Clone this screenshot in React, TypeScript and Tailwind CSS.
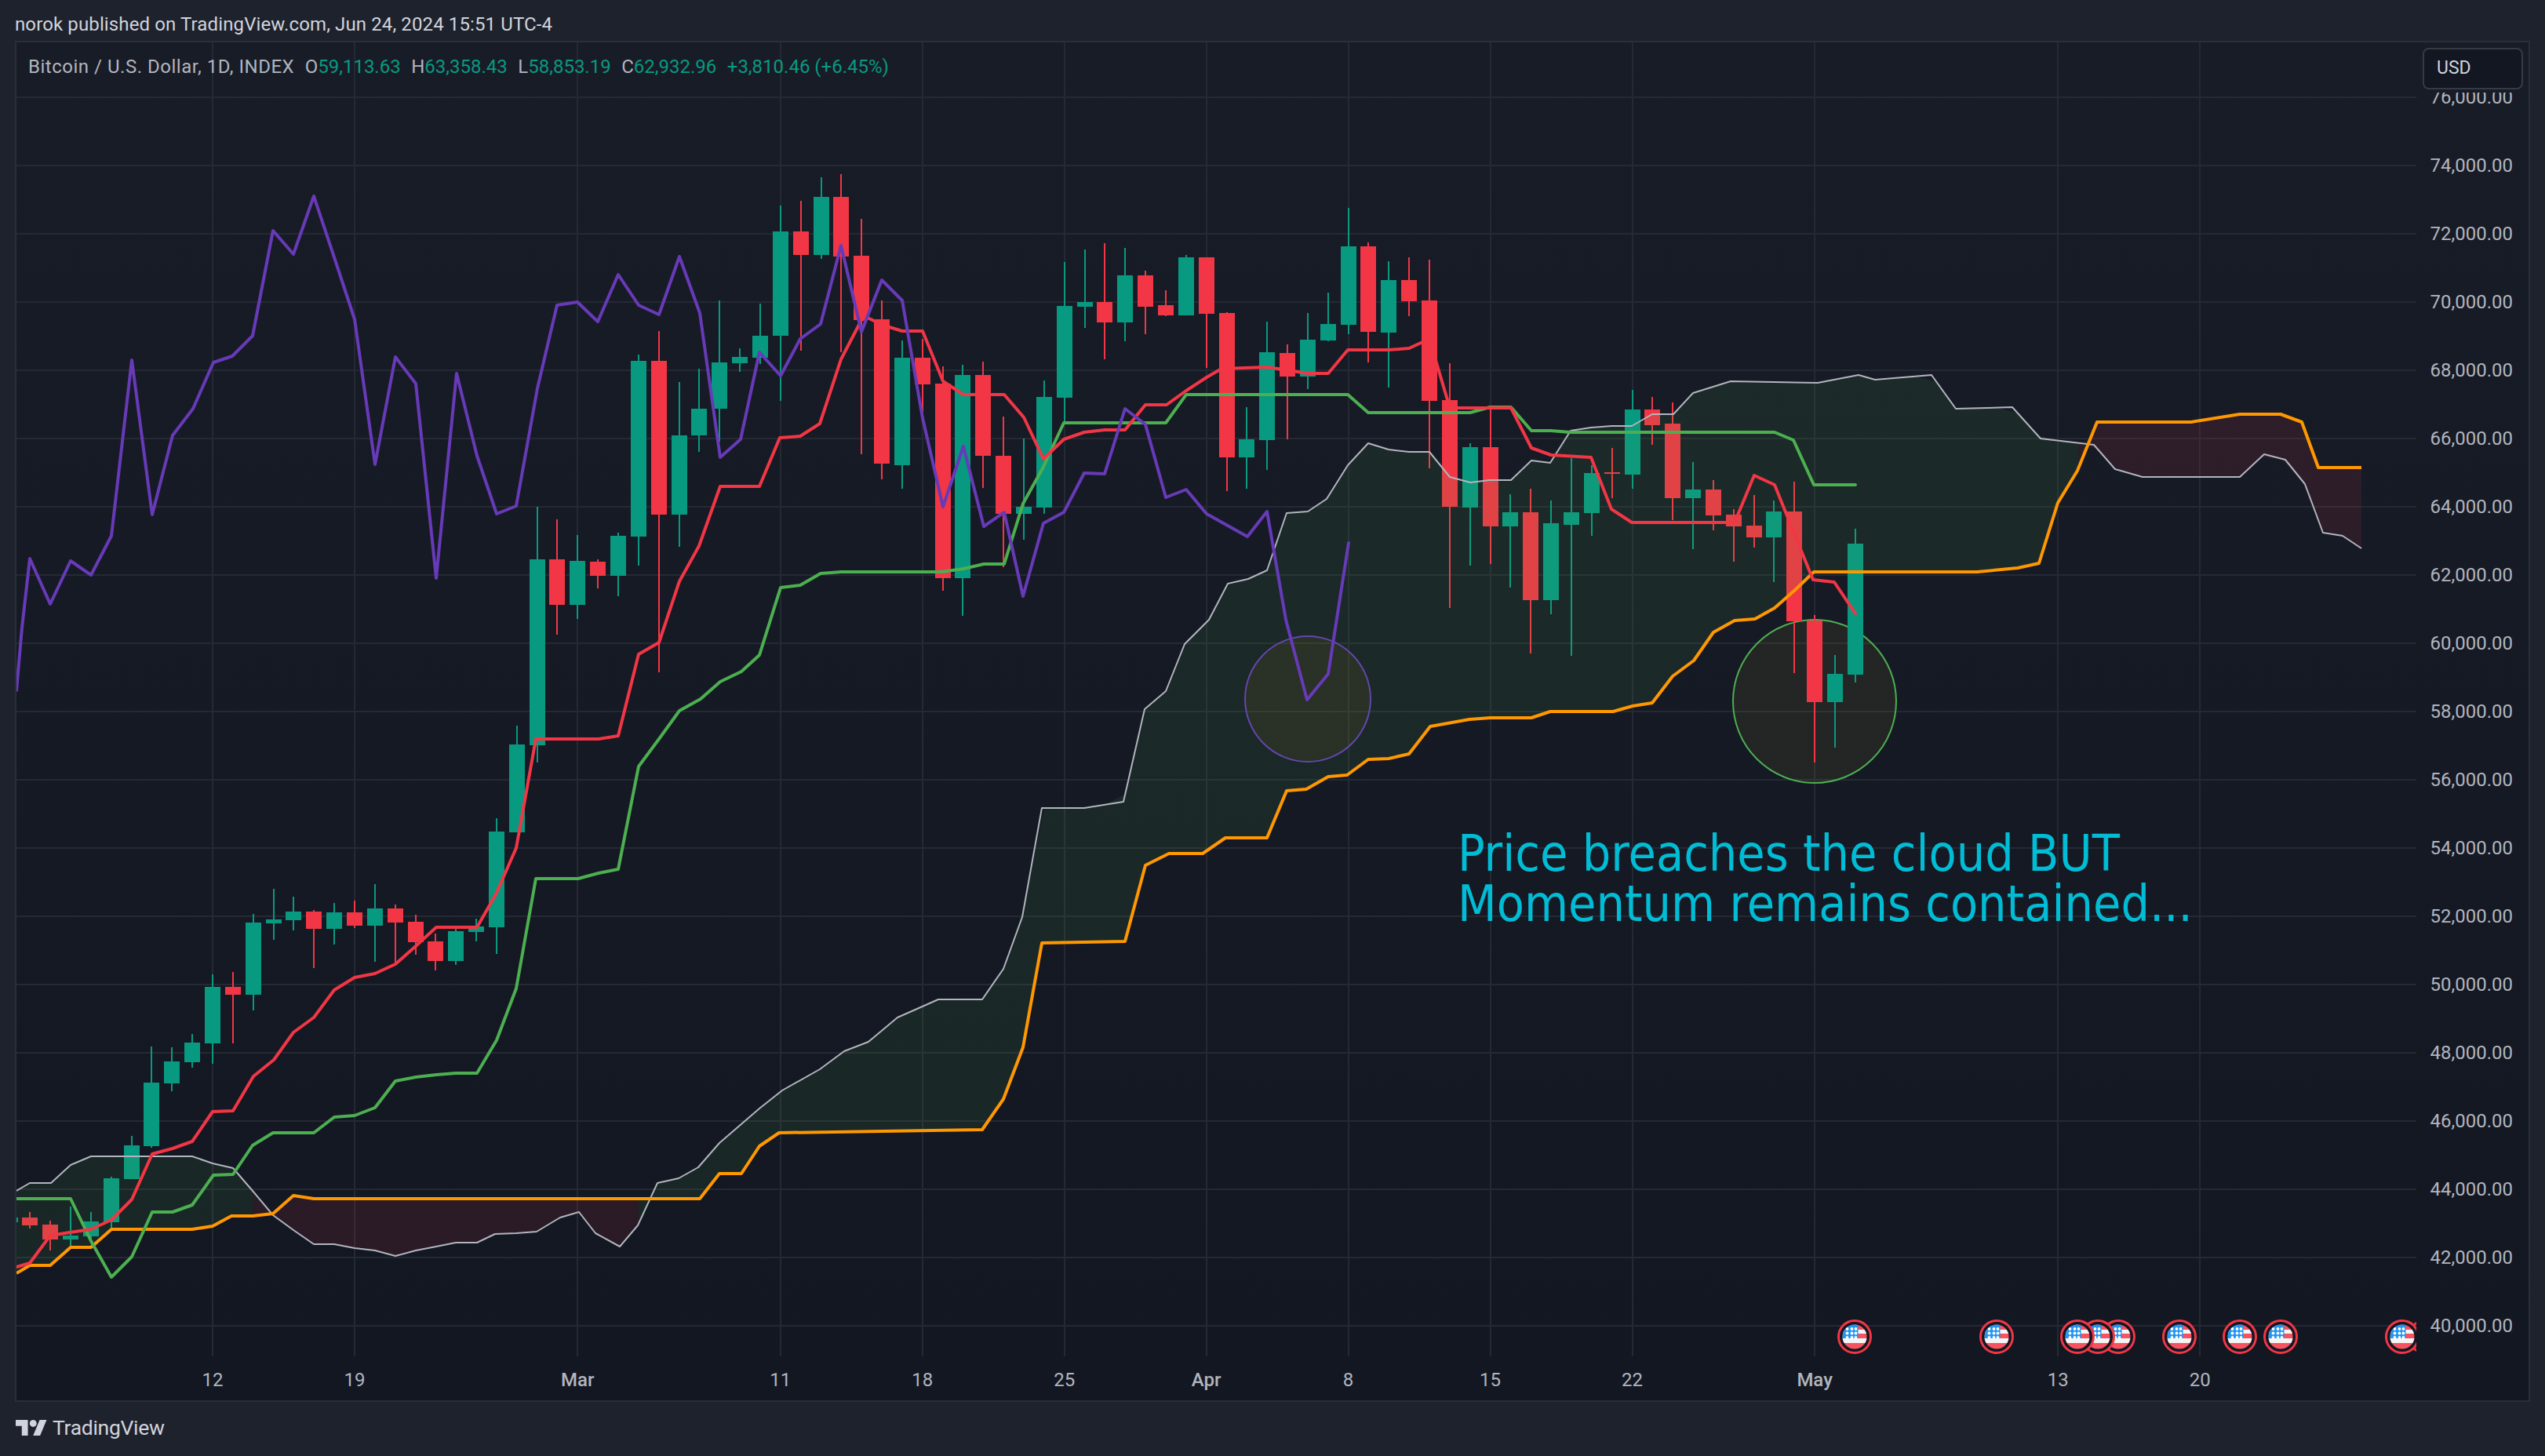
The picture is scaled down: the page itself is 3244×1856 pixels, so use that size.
import { useMemo } from 'react'

type Candle = [string, number, number, number, number]

const BAR_0 = 271
const BAR_STEP = 25.85
const barX = (d: number) => BAR_0 + BAR_STEP * d

// [colour, body top, body bottom, wick top, wick bottom], first candle is d = -10
const CANDLES: Candle[] = [
  ['g', 1552, 1558, 1552, 1558], ['r', 1552, 1562, 1545, 1566], ['r', 1561, 1580, 1556, 1594],
  ['g', 1575, 1580, 1538, 1589], ['g', 1557, 1576, 1545, 1580], ['g', 1502, 1558, 1500, 1568],
  ['g', 1460, 1503, 1448, 1503], ['g', 1380, 1461, 1334, 1463], ['g', 1353, 1381, 1335, 1391],
  ['g', 1329, 1354, 1318, 1361], ['g', 1258, 1330, 1242, 1356], ['r', 1258, 1268, 1239, 1330],
  ['g', 1176, 1268, 1165, 1288], ['g', 1172, 1177, 1133, 1198], ['g', 1162, 1173, 1143, 1186],
  ['r', 1162, 1184, 1160, 1234], ['g', 1163, 1184, 1151, 1204], ['r', 1163, 1180, 1148, 1183],
  ['g', 1158, 1180, 1127, 1226], ['r', 1158, 1176, 1153, 1229], ['r', 1175, 1201, 1166, 1217],
  ['r', 1200, 1225, 1190, 1237], ['g', 1187, 1225, 1184, 1230], ['g', 1181, 1188, 1171, 1200],
  ['g', 1060, 1182, 1043, 1216], ['g', 949, 1061, 925, 1061], ['g', 713, 950, 646, 972],
  ['r', 713, 771, 662, 809], ['g', 715, 771, 682, 789], ['r', 716, 734, 713, 750],
  ['g', 683, 734, 679, 760], ['g', 460, 684, 452, 721], ['r', 460, 656, 422, 857],
  ['g', 555, 656, 487, 697], ['g', 521, 555, 470, 576], ['g', 462, 521, 383, 563],
  ['g', 455, 463, 444, 474], ['g', 428, 456, 387, 464], ['g', 295, 428, 262, 511],
  ['r', 295, 325, 256, 447], ['g', 251, 325, 226, 330], ['r', 251, 327, 222, 449],
  ['r', 326, 408, 279, 579], ['r', 407, 591, 383, 611], ['g', 456, 593, 434, 623],
  ['r', 456, 490, 432, 534], ['r', 489, 737, 467, 753], ['g', 478, 737, 465, 785],
  ['r', 478, 581, 461, 622], ['r', 581, 655, 531, 723], ['g', 646, 655, 559, 688],
  ['g', 506, 647, 485, 655], ['g', 390, 507, 334, 540], ['g', 385, 391, 318, 418],
  ['r', 385, 411, 310, 458], ['g', 351, 411, 316, 435], ['r', 351, 391, 345, 426],
  ['r', 389, 402, 370, 403], ['g', 328, 402, 325, 402], ['r', 328, 400, 328, 469],
  ['r', 399, 583, 398, 626], ['g', 560, 583, 519, 623], ['g', 449, 561, 410, 599],
  ['r', 450, 480, 439, 560], ['g', 433, 480, 399, 496], ['g', 413, 434, 373, 435],
  ['g', 314, 414, 265, 426], ['r', 314, 423, 309, 462], ['g', 357, 424, 333, 494],
  ['r', 357, 384, 328, 403], ['r', 383, 511, 331, 597], ['r', 510, 646, 463, 775],
  ['g', 570, 647, 565, 721], ['r', 570, 671, 520, 719], ['g', 653, 671, 630, 749],
  ['r', 653, 765, 623, 833], ['g', 667, 765, 638, 783], ['g', 653, 669, 584, 836],
  ['g', 603, 654, 593, 683], ['r', 602, 604, 571, 635], ['g', 522, 605, 497, 623],
  ['r', 522, 542, 506, 567], ['r', 540, 635, 513, 663], ['g', 624, 635, 589, 700],
  ['r', 624, 657, 612, 676], ['r', 656, 671, 649, 716], ['r', 670, 685, 631, 698],
  ['g', 652, 685, 638, 742], ['r', 652, 792, 614, 858], ['r', 791, 895, 784, 972],
  ['g', 859, 895, 835, 953], ['g', 693, 860, 674, 870],
]

const RED_LINE =
  '21,1615 38,1610 64,1575 89,1571 116,1567 142,1555 168,1529 194,1471 220,1464 245,1455 271,1417 297,1416 323,1372 349,1351 374,1316 400,1297 426,1262 452,1246 478,1241 504,1229 530,1206 556,1182 608,1182 632,1140 658,1081 683,942 763,942 788,938 814,834 840,819 866,741 891,696 918,620 968,620 994,558 1020,556 1045,540 1072,458 1098,408 1106,405 1124,414 1150,422 1176,422 1202,486 1228,503 1280,503 1305,532 1330,585 1356,560 1382,551 1408,548 1434,548 1460,516 1487,516 1512,498 1538,481 1557,470 1615,468 1642,472 1667,476 1693,476 1718,446 1770,446 1796,444 1822,432 1848,520 1926,520 1952,571 1977,580 2028,583 2054,649 2080,666 2211,666 2236,606 2262,618 2287,680 2311,739 2338,742 2365,782'
const GREEN_LINE =
  '21,1528 90,1528 116,1582 142,1628 168,1602 194,1545 220,1545 245,1536 272,1498 297,1497 322,1460 348,1444 400,1444 426,1424 452,1422 478,1412 504,1378 530,1373 556,1370 581,1368 608,1368 633,1326 658,1260 683,1120 737,1120 763,1113 788,1108 814,977 840,942 866,906 893,891 918,869 945,856 968,835 995,749 1020,746 1046,731 1072,729 1200,729 1228,725 1254,719 1280,719 1304,642 1329,597 1356,539 1486,539 1512,503 1718,503 1744,526 1874,526 1899,519 1926,519 1952,549 1977,549 2001,551 2262,551 2286,561 2312,618 2365,618'
const ORANGE_LINE =
  '21,1623 38,1613 64,1613 90,1590 116,1590 142,1567 245,1567 271,1563 295,1550 322,1550 348,1547 374,1524 400,1528 892,1528 917,1496 945,1496 968,1461 993,1444 1252,1440 1279,1401 1304,1335 1328,1202 1434,1200 1460,1103 1490,1088 1533,1088 1562,1068 1615,1068 1640,1008 1665,1006 1693,990 1717,988 1744,968 1770,967 1796,961 1823,926 1873,917 1900,915 1952,915 1976,907 2056,907 2081,900 2106,896 2132,862 2159,842 2184,806 2211,791 2237,789 2262,775 2287,753 2312,729 2520,729 2572,724 2599,718 2623,641 2648,600 2673,538 2793,538 2855,528 2907,528 2934,538 2955,596 3010,596'
const WHITE_LINE =
  '21,1518 38,1508 65,1508 90,1485 116,1474 245,1474 271,1483 297,1489 322,1518 348,1549 374,1568 400,1586 426,1586 452,1591 478,1594 504,1601 530,1594 556,1589 581,1584 608,1584 631,1573 658,1572 684,1570 714,1552 738,1545 759,1572 790,1589 813,1562 838,1508 865,1502 890,1488 917,1457 968,1413 997,1390 1045,1363 1076,1340 1107,1328 1144,1297 1196,1274 1252,1274 1279,1235 1303,1169 1328,1030 1382,1030 1432,1022 1459,904 1486,881 1510,821 1541,790 1565,744 1591,738 1615,727 1640,654 1667,652 1691,636 1718,593 1744,565 1770,573 1796,576 1822,576 1848,608 1874,615 1899,612 1926,612 1952,587 1976,590 2002,549 2028,545 2054,543 2080,543 2106,528 2133,528 2158,501 2206,486 2317,488 2369,478 2390,484 2462,478 2493,521 2565,519 2601,559 2669,567 2696,598 2731,608 2855,608 2886,579 2913,586 2938,617 2961,679 2986,683 3010,699'
const PURPLE_LINE =
  '21,880 28,800 38,712 64,770 90,715 116,733 142,683 168,459 194,656 220,555 246,521 272,462 296,454 322,428 348,294 374,324 400,250 426,328 452,407 478,592 504,455 530,489 556,737 582,476 608,581 633,655 658,645 685,495 710,389 736,385 762,410 788,350 814,389 840,401 866,327 892,399 918,583 944,560 968,449 995,479 1020,432 1046,413 1072,313 1098,423 1124,357 1150,383 1176,533 1202,646 1228,569 1254,671 1280,653 1304,760 1330,667 1356,653 1382,603 1408,604 1434,521 1460,541 1486,634 1512,624 1538,655 1590,684 1615,652 1639,790 1666,892 1693,859 1719,692'

const PRICES = [
  '76,000.00', '74,000.00', '72,000.00', '70,000.00', '68,000.00', '66,000.00', '64,000.00',
  '62,000.00', '60,000.00', '58,000.00', '56,000.00', '54,000.00', '52,000.00', '50,000.00',
  '48,000.00', '46,000.00', '44,000.00', '42,000.00', '40,000.00',
]

const TIME_LABELS: { d: number; text: string; month?: boolean }[] = [
  { d: 0, text: '12' },
  { d: 7, text: '19' },
  { d: 18, text: 'Mar', month: true },
  { d: 28, text: '11' },
  { d: 35, text: '18' },
  { d: 42, text: '25' },
  { d: 49, text: 'Apr', month: true },
  { d: 56, text: '8' },
  { d: 63, text: '15' },
  { d: 70, text: '22' },
  { d: 79, text: 'May', month: true },
  { d: 91, text: '13' },
  { d: 98, text: '20' },
]

const FLAG_XS = [3091, 3062, 2907, 2855, 2778, 2700, 2674, 2648, 2545, 2364]

const parseLine = (line: string) => line.split(' ').map((p) => p.split(',').map(Number))

function lineYAt(pts: number[][], x: number) {
  for (let i = 1; i < pts.length; i++) {
    if (x <= pts[i][0]) {
      const [x0, y0] = pts[i - 1]
      const [x1, y1] = pts[i]
      return y0 + ((y1 - y0) * (x - x0)) / (x1 - x0)
    }
  }
  return pts[pts.length - 1][1]
}

/** Cloud between the two leading spans, colour switches per bar like the real chart */
function buildCloud() {
  const a = parseLine(WHITE_LINE)
  const b = parseLine(ORANGE_LINE)
  const xs = [21]
  for (let d = -9; barX(d) < 3010; d++) xs.push(barX(d))
  xs.push(3010)
  const runs: { up: boolean; xs: number[] }[] = []
  for (let i = 1; i < xs.length; i++) {
    const up = lineYAt(a, xs[i]) < lineYAt(b, xs[i])
    const last = runs[runs.length - 1]
    if (last && last.up === up) last.xs.push(xs[i])
    else runs.push({ up, xs: [xs[i - 1], xs[i]] })
  }
  return runs.map((run) => ({
    up: run.up,
    points: [
      ...run.xs.map((x) => `${x},${lineYAt(a, x)}`),
      ...[...run.xs].reverse().map((x) => `${x},${lineYAt(b, x)}`),
    ].join(' '),
  }))
}

function Flag({ x, id }: { x: number; id: string }) {
  const y = 1704
  return (
    <g>
      <circle cx={x} cy={y} r={20.5} fill="#131722" stroke="#f23645" strokeWidth={3} />
      <clipPath id={id}>
        <circle cx={x} cy={y} r={15.5} />
      </clipPath>
      <g clipPath={`url(#${id})`}>
        <rect x={x - 16} y={y - 16} width={32} height={32} fill="#f7525f" />
        <rect x={x - 16} y={y - 9} width={32} height={5} fill="#f5f5f5" />
        <rect x={x - 16} y={y + 2} width={32} height={6} fill="#f5f5f5" />
        <rect x={x - 16} y={y - 16} width={20.5} height={18} fill="#2196f3" />
        {[-10, -4.5, 1].map((dy) =>
          [-9.5, -3.5, 1.5].map((dx) => (
            <circle key={`${dx}${dy}`} cx={x + dx} cy={y + dy} r={1.9} fill="#ffffff" />
          )),
        )}
      </g>
    </g>
  )
}

function Chart() {
  const cloud = useMemo(buildCloud, [])
  return (
    <svg className="block h-[1675px] w-[3059px]" viewBox="21 54 3059 1675">
      {PRICES.map((_, i) => (
        <rect key={i} x={21} y={123 + 87 * i} width={3059} height={2} fill="#252933" />
      ))}
      {TIME_LABELS.map((t) => (
        <rect key={t.d} x={Math.round(barX(t.d)) - 1} y={54} width={2} height={1675} fill="#252933" />
      ))}

      <ellipse cx={1667} cy={891} rx={80} ry={80} fill="#ff9800" fillOpacity={0.07} stroke="#673ab7" strokeWidth={2} />
      <ellipse cx={2313} cy={894} rx={104} ry={104} fill="#ffeb3b" fillOpacity={0.06} stroke="#4caf50" strokeWidth={2} />

      {CANDLES.map(([c, top, bottom, hi, lo], i) => {
        const cx = Math.round(barX(i - 10))
        const fill = c === 'g' ? '#089981' : '#f23645'
        return (
          <g key={i} fill={fill}>
            <rect x={cx - 1} y={hi} width={2} height={lo - hi} />
            <rect x={cx - 10} y={top} width={20} height={bottom - top} />
          </g>
        )
      })}

      {cloud.map((run, i) => (
        <polygon key={i} points={run.points} fill={run.up ? '#4caf50' : '#f23645'} fillOpacity={0.1} />
      ))}

      <g fill="none" strokeLinejoin="round">
        <polyline points={WHITE_LINE} stroke="#b2b5be" strokeWidth={2} />
        <polyline points={ORANGE_LINE} stroke="#ff9800" strokeWidth={4} />
        <polyline points={GREEN_LINE} stroke="#4caf50" strokeWidth={4} strokeLinecap="round" />
        <polyline points={RED_LINE} stroke="#f23645" strokeWidth={4} strokeLinecap="round" />
        <polyline points={PURPLE_LINE} stroke="#673ab7" strokeWidth={4} strokeLinecap="round" />
      </g>

      {FLAG_XS.map((x, i) => (
        <Flag key={x} x={x} id={`flag-${i}`} />
      ))}
    </svg>
  )
}

function Legend() {
  return (
    <div className="absolute left-[15px] top-[15px] flex gap-[13.5px] text-[24px] leading-[32px] text-[#b2b5be]">
      <span className="tracking-[0.52px]">Bitcoin / U.S. Dollar, 1D, INDEX</span>
      {[
        ['O', '59,113.63'],
        ['H', '63,358.43'],
        ['L', '58,853.19'],
        ['C', '62,932.96'],
      ].map(([k, v]) => (
        <span key={k}>
          {k}
          <span className="text-[#089981]">{v}</span>
        </span>
      ))}
      <span className="text-[#089981]">+3,810.46 (+6.45%)</span>
    </div>
  )
}

export default function App() {
  return (
    <div className="flex h-[1856px] w-[3244px] flex-col overflow-hidden bg-[#1e222d] font-[Roboto,sans-serif] text-[#b2b5be]">
      <header className="flex h-[52px] items-center pl-[19px] pt-[10px] text-[24px] tracking-[0.12px] text-[#d1d4dc]">
        norok published on TradingView.com, Jun 24, 2024 15:51 UTC-4
      </header>

      <main className="relative ml-[19px] h-[1735px] w-[3206px] border-2 border-[#2a2e39] bg-linear-to-b from-[#181c27] to-[#131722]">
        <div className="flex h-[1675px]">
          <div className="relative w-[3059px]">
            <Chart />
            <Legend />
            <div className="absolute left-[1837px] top-[1002px] font-['DejaVu_Sans_Condensed','DejaVu_Sans',sans-serif] font-stretch-condensed text-[64px] leading-[64px] whitespace-nowrap text-[#00bcd4]">
              <div>Price breaches the cloud BUT</div>
              <div>Momentum remains contained...</div>
            </div>
          </div>
          <div className="flex flex-1 flex-col items-end pr-[20px] pt-[26px] text-[24px]">
            {PRICES.map((p) => (
              <div key={p} className="flex h-[87px] shrink-0 items-center">
                {p}
              </div>
            ))}
          </div>
        </div>

        <div className="relative h-[56px]">
          {TIME_LABELS.map((t) => (
            <span
              key={t.d}
              className={`absolute top-[16px] -translate-x-1/2 text-[24px] leading-[28px] ${t.month ? 'font-medium' : ''}`}
              style={{ left: barX(t.d) - 21 }}
            >
              {t.text}
            </span>
          ))}
        </div>

        {/* the currency badge sits on a patch of axis background that cuts the top price label */}
        <div className="absolute left-[3059px] right-0 top-0 h-[64px] bg-[#181c27] pl-[8px] pt-[7px]">
          <div className="flex h-[53px] w-[128px] items-center rounded-[8px] border-2 border-[#363a45] bg-[#131722] pl-[16px] text-[23px] text-[#d1d4dc]">
            USD
          </div>
        </div>
      </main>

      <footer className="flex flex-1 items-center gap-[7px] pl-[20px] pb-[3px] text-[#d1d4dc]">
        <svg className="h-[20px] w-[40px]" viewBox="0 4 36 18" fill="currentColor">
          <path d="M14 22H7V11H0V4h14v18zM28 22h-8l7.5-18h8L28 22z" />
          <circle cx="20" cy="8" r="4" />
        </svg>
        <span className="text-[26.5px] tracking-[-0.3px]">TradingView</span>
      </footer>
    </div>
  )
}
